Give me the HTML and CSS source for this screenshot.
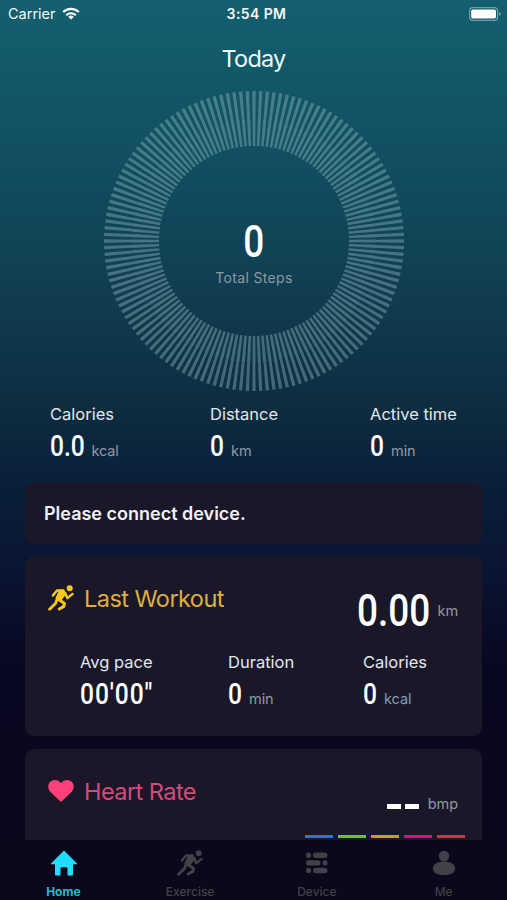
FILE: index.html
```html
<!DOCTYPE html>
<html lang="en">
<head>
<meta charset="utf-8">
<title>Today</title>
<link rel="stylesheet" href="styles.css">
</head>
<body>
<svg class="defs" aria-hidden="true">
  <symbol id="runner" viewBox="0 0 26 26">
    <circle cx="21.7" cy="3.3" r="3"/>
    <path d="M10.500 6.500 14 4.300 18.300 7.200 17.300 10.200 12.700 16.200 8 15.500 7.500 13Z"/>
    <g fill="none" stroke="currentColor" stroke-linejoin="round" stroke-linecap="round">
      <path stroke-width="2.4" d="M4.900 10.500 9 5.500 15.500 5.500"/>
      <path stroke-width="2.4" d="M17.200 8 19.400 13.200 24.600 8.900"/>
      <path stroke-width="2.8" d="M9.300 14 7.500 18.400 1.600 24.300"/>
      <path stroke-width="3" d="M11.200 14.800 16.500 18.400 15.800 21.400 11.300 24"/>
    </g>
  </symbol>
</svg>
<div class="screen">
  <header class="status">
    <div class="carrier"><span>Carrier</span>
      <svg class="wifi" viewBox="0 0 18 13"><g fill="none" stroke="#fff" stroke-width="2.1"><path d="M1.2 5.1a11 11 0 0 1 15.600 0"/><path d="M4.200 8.200a6.800 6.800 0 0 1 9.600 0"/></g><path fill="#fff" d="M9 12.600 6.200 9.900a4 4 0 0 1 5.600 0Z"/></svg>
    </div>
    <div class="clock">3:54 PM</div>
    <svg class="battery" viewBox="0 0 32 14"><rect x=".6" y=".6" width="28" height="12.8" rx="3.4" fill="none" stroke="#fff" stroke-opacity=".4" stroke-width="1.2"/><rect x="2.200" y="2.400" width="24.800" height="9.200" rx="1.800" fill="#fff"/><path d="M30.300 5v4q1.400-.7 1.400-2t-1.400-2" fill="#fff" fill-opacity=".5"/></svg>
  </header>
  <h1 class="title">Today</h1>
  <div class="dial">
    <svg class="ring" viewBox="0 0 300 300">
      <circle cx="150" cy="150" r="136" stroke-width="28" pathLength="280" stroke-dasharray="1 1" stroke-dashoffset=".5"/>
      <circle cx="150" cy="150" r="108.500" stroke-width="27" pathLength="280" stroke-dasharray="1.160 .840" stroke-dashoffset=".58"/>
    </svg>
    <div class="total"><span class="num big">0</span><span class="caption">Total Steps</span></div>
  </div>
  <section class="summary">
    <div class="stat"><span class="label">Calories</span><div class="value decimal"><span class="num">0.0</span><span class="unit">kcal</span></div></div>
    <div class="stat"><span class="label">Distance</span><div class="value"><span class="num">0</span><span class="unit">km</span></div></div>
    <div class="stat"><span class="label">Active time</span><div class="value"><span class="num">0</span><span class="unit">min</span></div></div>
  </section>
  <section class="card notice">Please connect device.</section>
  <section class="card workout">
    <div class="head yellow"><svg class="icon"><use href="#runner"/></svg><h2>Last Workout</h2>
      <div class="reading"><span class="num big">0.00</span><span class="unit">km</span></div></div>
    <div class="details">
      <div class="stat"><span class="label">Avg pace</span><div class="value"><span class="num pace">00'00"</span></div></div>
      <div class="stat"><span class="label">Duration</span><div class="value"><span class="num">0</span><span class="unit">min</span></div></div>
      <div class="stat"><span class="label">Calories</span><div class="value"><span class="num">0</span><span class="unit">kcal</span></div></div>
    </div>
  </section>
  <section class="card heart">
    <div class="head pink"><svg class="icon" viewBox="0 0 26 26"><path d="M13 24 2.300 13.700C-.8 10.300-.2 5.400 3 3.200 6.200 1 10.600 1.800 13 5.200 15.400 1.800 19.800 1 23 3.200c3.200 2.200 3.800 7.100.7 10.500Z"/></svg><h2>Heart Rate</h2>
      <div class="reading"><span class="dashes"><i></i><i></i></span><span class="unit">bmp</span></div></div>
    <div class="zones"><i class="z1"></i><i class="z2"></i><i class="z3"></i><i class="z4"></i><i class="z5"></i></div>
  </section>
  <nav class="tabs">
    <div class="tab active"><svg viewBox="0 0 26 26"><path d="M13 .5 26 13.500q.2.8-.8.8H22V24.500q0 1-1 1h-4.500v-7q0-1.200-1.200-1.200h-4.600q-1.200 0-1.200 1.200v7H5q-1 0-1-1V14.300H.8q-1 0-.8-.8Z"/></svg><span>Home</span></div>
    <div class="tab"><svg><use href="#runner"/></svg><span>Exercise</span></div>
    <div class="tab"><svg viewBox="0 0 26 26"><rect x="2" y="2.500" width="5" height="5.400" rx="2.500"/><rect x="9" y="2.500" width="14.500" height="5.400" rx="2.700"/><rect x="2" y="10.200" width="14.500" height="5.400" rx="2.700"/><rect x="18.500" y="10.200" width="5" height="5.400" rx="2.500"/><rect x="2" y="17.800" width="5" height="5.400" rx="2.500"/><rect x="9" y="17.800" width="14.500" height="5.400" rx="2.700"/></svg><span>Device</span></div>
    <div class="tab"><svg viewBox="0 0 26 26"><circle cx="13" cy="6" r="5.300"/><path d="M2 18.500C2 14 6.500 11.500 13 11.500S24 14 24 18.500C24 23 20 25 13 25S2 23 2 18.500Z"/></svg><span>Me</span></div>
  </nav>
</div>
</body>
</html>
```
FILE: styles.css
```css
* { box-sizing: border-box; }
body { margin: 0; font-family: Inter, "Liberation Sans", sans-serif; color: #e4e8f0; }
h1, h2 { margin: 0; font-weight: 400; }
.defs { display: none; }
svg { fill: currentColor; flex: none; display: block; }
.screen {
  width: 507px; height: 900px; overflow: hidden;
  display: flex; flex-direction: column;
  background: linear-gradient(#135f70 0, #125a69 60px, #114d5f 170px, #103c50 300px, #0d2c40 410px, #0a1e38 490px, #091532 570px, #090822 660px, #090719 900px);
}
.status { height: 27px; padding: 0 6px 0 8px; display: grid; grid-template-columns: 1fr auto 1fr; align-items: center; color: #f2f8fa; }
.carrier { display: flex; align-items: center; gap: 6px; font-size: 14.5px; letter-spacing: 0; }
.wifi { width: 18px; height: 13px; }
.clock { font-size: 14px; font-weight: 600; letter-spacing: .4px; padding-left: 4px; }
.battery { width: 32px; height: 14px; justify-self: end; }
.title { height: 64px; line-height: 64px; text-align: center; font-size: 23.5px; letter-spacing: -.8px; color: #eef8fa; }
.dial { width: 300px; height: 300px; margin-left: 104px; display: grid; }
.ring, .total { grid-area: 1 / 1; }
.ring { width: 300px; height: 300px; }
.ring circle { fill: none; stroke: rgba(150, 190, 198, .4); }
.total { display: flex; flex-direction: column; align-items: center; padding-top: 127px; }
.caption { margin-top: 12px; font-size: 14px; line-height: 20px; letter-spacing: .35px; color: #8b9ba3; }
.num { font-family: Roboto, sans-serif; font-weight: 500; font-size: 30px; line-height: 30px; color: #fff; transform: scaleX(.82); transform-origin: left; }
.num.big { font-size: 45px; line-height: 46px; transform: scaleX(.82); }
.num.pace { letter-spacing: 1.1px; }
.total .num.big { transform-origin: center; line-height: 48px; margin-bottom: -10px; }
.label { display: block; font-size: 16.5px; line-height: 20px; color: #e2e7ee; }
.value { display: flex; align-items: baseline; margin-top: 7px; height: 32px; gap: 4px; }
.value.decimal { gap: 0; }
.decimal .unit { margin-left: -1px; }
.unit { font-size: 14.5px; letter-spacing: -.1px; color: #8f98a6; }
.summary { margin-top: 13px; height: 79px; padding-left: 50px; display: grid; grid-template-columns: 160px 160px auto; }
.card { flex: none; width: 457px; margin-left: 25px; background: #1a1828; border-radius: 9px; }
.notice { height: 61px; padding-left: 19px; line-height: 61px; font-size: 18px; font-weight: 600; color: #f2f0f7; }
.workout { height: 180px; margin-top: 12px; }
.head { display: flex; padding: 29px 24px 0 23px; height: 96px; }
.head h2 { font-size: 23.5px; line-height: 28px; margin-left: 10px; letter-spacing: -.55px; }
.yellow { color: #fbc820; } .yellow h2 { color: #dfae40; }
.pink { color: #ff4079; } .pink h2 { color: #d44b7d; }
.icon { width: 26px; height: 26px; }
.reading { margin-left: auto; display: flex; align-items: center; }
.workout .reading { height: 52px; }
.workout .reading .unit { margin-top: -2px; }
.workout .reading .num { transform-origin: right; margin-right: 7px; }
.details { display: grid; grid-template-columns: 148px 135px auto; padding-left: 55px; }
.heart { flex: 0 0 91px; height: 91px; margin-top: 13px; border-radius: 9px 9px 0 0; }
.heart .head { height: 86px; }
.heart .reading { height: 50px; gap: 9px; }
.dashes { display: flex; gap: 4px; padding-top: 7px; }
.dashes i { width: 14px; height: 5px; background: #fff; }
.zones { display: flex; gap: 5px; padding-left: 280px; }
.zones i { width: 28px; height: 3px; }
.z1 { background: #2279dc; } .z2 { background: #6fc51e; } .z3 { background: #e2921e; } .z4 { background: #d7127f; } .z5 { background: #cf3b1c; }
.tabs { flex: none; height: 60px; background: #0a081a; display: grid; grid-template-columns: repeat(4, 1fr); padding-top: 10px; }
.tab { display: flex; flex-direction: column; align-items: center; color: #414147; font-size: 12px; font-weight: 500; line-height: 15px; gap: 8px; }
.tab svg { width: 26px; height: 26px; }
.tab.active { color: #20dcff; }
.active svg { margin-left: 1px; }
.active span { color: #30b4cf; font-weight: 700; }
```
